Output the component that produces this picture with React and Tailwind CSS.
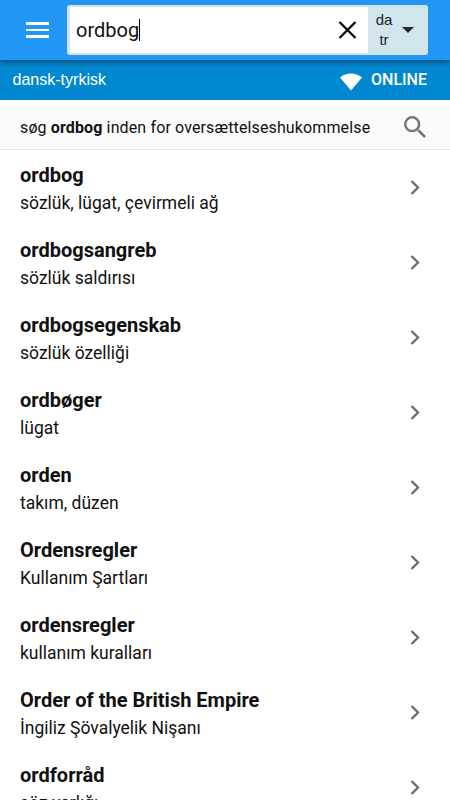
const entries = [
  ['ordbog', 'sözlük, lügat, çevirmeli ağ'],
  ['ordbogsangreb', 'sözlük saldırısı'],
  ['ordbogsegenskab', 'sözlük özelliği'],
  ['ordbøger', 'lügat'],
  ['orden', 'takım, düzen'],
  ['Ordensregler', 'Kullanım Şartları'],
  ['ordensregler', 'kullanım kuralları'],
  ['Order of the British Empire', 'İngiliz Şövalyelik Nişanı'],
  ['ordforråd', 'söz varlığı'],
];

function Header() {
  return (
    <header className="relative z-10 flex h-[60px] shrink-0 items-start bg-[#2196f3] pt-[5px] pl-[26px] shadow-[0_1px_7px_rgba(0,0,0,0.6)]">
      <button aria-label="Menu" className="mt-[17px] flex w-[23px] flex-col gap-[4px]">
        <span className="h-[2.5px] w-full bg-white" />
        <span className="h-[2.5px] w-full bg-white" />
        <span className="h-[2.5px] w-full bg-white" />
      </button>
      <div className="ml-[18px] flex h-[50px] w-[361px] rounded-[3px] bg-[#d1e5ec] py-[2px] pl-[3px]">
        <div className="flex h-[46px] w-[298px] items-center bg-white pl-[6px]">
          <span className="text-[20px] leading-6 text-[#111]">ordbog</span>
          <span className="h-[22px] w-px bg-black" />
          <svg className="mr-[11px] ml-auto" width="19" height="18" viewBox="0 0 19 18" fill="none" stroke="#0a0a0a" strokeWidth="2.3">
            <path d="M1.500 1 L17.500 17 M17.500 1 L1.500 17" />
          </svg>
        </div>
        <button className="flex flex-1 items-center pl-[4px] font-['Liberation_Sans',Arial,sans-serif] text-[15px] leading-5 text-[#222]">
          <span className="w-[24px] text-center">da<br />tr</span>
          <svg className="ml-[6px]" width="12" height="6" viewBox="0 0 12 6"><path d="M0 0h12L6 6z" fill="#2d2828" /></svg>
        </button>
      </div>
    </header>
  );
}

function StatusBar() {
  return (
    <div className="flex h-10 shrink-0 items-center bg-[#0288d1] pr-[23px] pl-[12.5px] text-[16px] text-white">
      <span className="font-['Liberation_Sans',Arial,sans-serif] text-[16px] tracking-[0.01px]">dansk-tyrkisk</span>
      <svg className="mt-[3px] ml-auto" width="22" height="18" viewBox="0 0 22 18"><path d="M0 4.500C6.500-.7 15.500-.7 22 4.500L11 17.500z" fill="white" /></svg>
      <span className="ml-[9px] font-medium">ONLINE</span>
    </div>
  );
}

export default function App() {
  return (
    <div className="flex h-[800px] w-[450px] flex-col overflow-hidden bg-white font-[Roboto,sans-serif] text-[#111]">
      <Header />
      <StatusBar />
      <div className="mt-[5px] flex h-[45px] shrink-0 items-center border-b border-[#e4e4e4] bg-[#fafafa] pr-[24px] pl-[20px]">
        <p className="pt-px text-[16px] tracking-[0.13px] whitespace-nowrap">søg <b>ordbog</b> inden for oversættelseshukommelse</p>
        <svg className="ml-auto" width="22" height="22" viewBox="3 3 17.5 17.5" fill="#757575">
          <path d="M15.500 14h-.79l-.28-.27A6.471 6.471 0 0 0 16 9.500 6.500 6.500 0 1 0 9.500 16c1.610 0 3.090-.59 4.230-1.570l.27.28v.79l5 4.990L20.490 19l-4.990-5zm-6 0C7.010 14 5 11.990 5 9.500S7.010 5 9.500 5 14 7.010 14 9.500 11.990 14 9.500 14z" />
        </svg>
      </div>
      <ul className="-mt-px shrink-0">
        {entries.map(([word, meaning]) => (
          <li key={word} className="flex h-[75px] items-center justify-between pr-[30px] pl-[20px]">
            <div className="pt-[5px]">
              <div className="text-[20px] leading-[27px] font-bold">{word}</div>
              <div className="mt-px text-[17.5px] leading-[27px]">{meaning}</div>
            </div>
            <svg className="mt-px" width="10" height="15" viewBox="0 0 10 15" fill="none" stroke="#6b6b6b" strokeWidth="2.3">
              <path d="M1.500 1L8 7.500L1.500 14" />
            </svg>
          </li>
        ))}
      </ul>
    </div>
  );
}
